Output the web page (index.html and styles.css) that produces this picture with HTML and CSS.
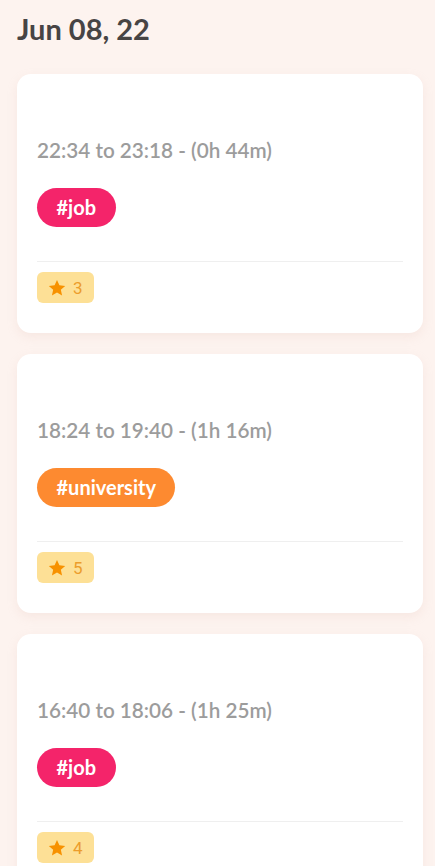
FILE: index.html
```html
<!DOCTYPE html>
<html>
<head>
<meta charset="utf-8">
<link rel="stylesheet" href="styles.css">
</head>
<body>
<main class="page">
  <h1 class="date">Jun 08, 22</h1>
  <section class="card">
    <div class="time">22:34 to 23:18 - (0h 44m)</div>
    <div class="tags"><span class="tag tag-job">#job</span></div>
    <div class="footer"><span class="rating"><svg class="star" viewBox="0 0 24 24"><path d="M12 2.5l2.9 6.3 6.9.7-5.2 4.7 1.5 6.8L12 17.5 5.9 21l1.5-6.8L2.2 9.5l6.9-.7z"/></svg><span class="num">3</span></span></div>
  </section>
  <section class="card">
    <div class="time">18:24 to 19:40 - (1h 16m)</div>
    <div class="tags"><span class="tag tag-uni">#university</span></div>
    <div class="footer"><span class="rating"><svg class="star" viewBox="0 0 24 24"><path d="M12 2.5l2.9 6.3 6.9.7-5.2 4.7 1.5 6.8L12 17.5 5.9 21l1.5-6.8L2.2 9.5l6.9-.7z"/></svg><span class="num">5</span></span></div>
  </section>
  <section class="card">
    <div class="time">16:40 to 18:06 - (1h 25m)</div>
    <div class="tags"><span class="tag tag-job">#job</span></div>
    <div class="footer"><span class="rating"><svg class="star" viewBox="0 0 24 24"><path d="M12 2.5l2.9 6.3 6.9.7-5.2 4.7 1.5 6.8L12 17.5 5.9 21l1.5-6.8L2.2 9.5l6.9-.7z"/></svg><span class="num">4</span></span></div>
  </section>
</main>
</body>
</html>
```

FILE: styles.css
```css
html, body {
  margin: 0;
  padding: 0;
  background: #fdf3ef;
  font-family: Lato, "Open Sans", sans-serif;
}
.page {
  padding: 13px 12px 0 17px;
  display: flex;
  flex-direction: column;
  gap: 21px;
  height: 866px;
  overflow: hidden;
  box-sizing: border-box;
}
.date {
  margin: 0 0 8px 0;
  font-size: 29px;
  line-height: 32px;
  font-weight: 700;
  color: #474444;
}
.card {
  flex: none;
  background: #fff;
  border-radius: 14px;
  padding: 64px 20px 0 20px;
  height: 259px;
  box-sizing: border-box;
  box-shadow: 0 4px 10px rgba(230, 200, 190, 0.25);
}
.time {
  font-size: 20.7px;
  line-height: 24px;
  font-weight: 600;
  color: #9c9c9c;
}
.tags {
  margin-top: 26px;
  display: flex;
}
.tag {
  height: 39px;
  line-height: 39px;
  padding: 0 19.5px;
  border-radius: 20px;
  color: #fff;
  font-size: 20px;
  font-weight: 700;
}
.tag-job { background: #f4246a; }
.tag-uni { background: #fd8a30; }
.footer {
  margin-top: 34px;
  border-top: 1px solid #efefef;
  padding-top: 10px;
  display: flex;
}
.rating {
  display: flex;
  align-items: center;
  gap: 6px;
  height: 31px;
  padding: 0 11px 0 10px;
  background: #fde096;
  border-radius: 6px;
}
.star {
  width: 20px;
  height: 20px;
  fill: #f79100;
}
.num {
  font-family: Roboto, sans-serif;
  font-size: 17px;
  color: #ec9d2c;
}
```
